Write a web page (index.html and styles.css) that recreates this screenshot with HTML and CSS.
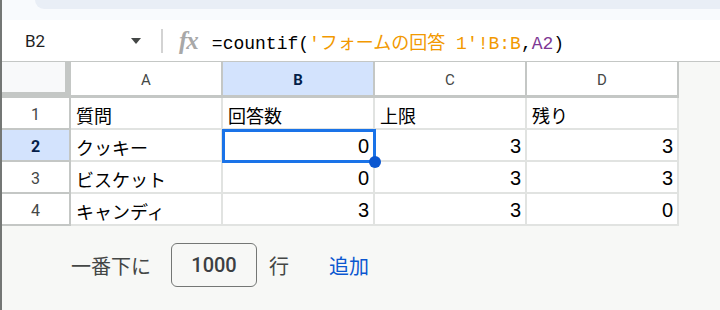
FILE: index.html
```html
<!DOCTYPE html>
<html>

<head>
    <link rel="stylesheet" href="styles.css">
</head>

<body>
    <div class="app">
        <div class="topbar">
            <div class="topbar-tab"></div>
        </div>

        <div class="formula-bar">
            <span class="name-box">B2</span>
            <span class="name-arrow"></span>
            <span class="divider"></span>
            <span class="fx">fx</span>
            <span class="formula">=countif(<span class="f-str">'フォームの回答 1'!B:B</span>,<span class="f-ref">A2</span>)</span>
        </div>

        <div class="sheet">
            <div class="corner"></div>
            <div class="col-head">A</div>
            <div class="col-head active">B</div>
            <div class="col-head">C</div>
            <div class="col-head">D</div>

            <div class="row-head">1</div>
            <div class="cell jp">質問</div>
            <div class="cell jp">回答数</div>
            <div class="cell jp">上限</div>
            <div class="cell jp">残り</div>

            <div class="row-head active">2</div>
            <div class="cell jp">クッキー</div>
            <div class="cell num selected">0<span class="handle"></span></div>
            <div class="cell num">3</div>
            <div class="cell num">3</div>

            <div class="row-head">3</div>
            <div class="cell jp">ビスケット</div>
            <div class="cell num">0</div>
            <div class="cell num">3</div>
            <div class="cell num">3</div>

            <div class="row-head">4</div>
            <div class="cell jp">キャンディ</div>
            <div class="cell num">3</div>
            <div class="cell num">3</div>
            <div class="cell num">0</div>
        </div>

        <div class="add-rows">
            <span>一番下に</span>
            <span class="count-box">1000</span>
            <span class="unit">行</span>
            <span class="add-link">追加</span>
        </div>
    </div>
</body>

</html>
```

FILE: styles.css
```css
body {
    margin: 0;
    font-family: "Liberation Sans", "Noto Sans CJK JP", sans-serif;
}

.app {
    height: 310px;
    border-left: 2px solid #747775;
    background-color: #f7f8f6;
    overflow: hidden;
}

.topbar {
    height: 20px;
    background-color: #f8fafd;
}

.topbar-tab {
    margin-left: 33px;
    height: 9px;
    background-color: #e9eef6;
    border-bottom-left-radius: 14px;
}

.formula-bar {
    height: 41px;
    display: flex;
    align-items: center;
    background-color: #fff;
    border-bottom: 1px solid #c4c7c5;
}

.name-box {
    width: 106px;
    padding-left: 23px;
    font-family: Roboto, sans-serif;
    font-size: 17px;
    color: #1f1f1f;
}

.name-arrow {
    width: 0;
    height: 0;
    border-left: 5px solid transparent;
    border-right: 5px solid transparent;
    border-top: 6px solid #444746;
}

.divider {
    width: 2px;
    height: 24px;
    margin-left: 20px;
    background-color: #d3d3d3;
}

.fx {
    margin-left: 16px;
    font-family: "Liberation Serif", serif;
    font-style: italic;
    font-weight: bold;
    font-size: 25px;
    color: #a8a8a8;
    letter-spacing: -1px;
}

.formula {
    margin-left: 14px;
    font-family: "Liberation Mono", "Noto Sans CJK JP", monospace;
    font-size: 18px;
    color: #000;
}

.f-str {
    color: #f29900;
}

.f-ref {
    color: #7e3794;
}

.sheet {
    display: grid;
    grid-template-columns: 69px 152px 152px 152px 152px;
    grid-template-rows: 36px 32px 32px 32px 32px;
}

.corner {
    background-color: #f8f9fa;
    border-right: 6px solid #c4c7c5;
    border-bottom: 6px solid #c4c7c5;
}

.col-head {
    display: flex;
    align-items: center;
    justify-content: center;
    padding-top: 2px;
    background-color: #fff;
    border-right: 2px solid #c4c7c5;
    border-bottom: 3px solid #c4c7c5;
    font-family: Roboto, sans-serif;
    font-size: 15px;
    color: #444746;
}

.row-head {
    display: flex;
    align-items: center;
    justify-content: center;
    padding-top: 2px;
    background-color: #fff;
    border-right: 2px solid #c4c7c5;
    border-bottom: 2px solid #c4c7c5;
    font-family: Roboto, sans-serif;
    font-size: 16px;
    color: #444746;
}

.col-head.active,
.row-head.active {
    background-color: #d3e3fd;
    color: #041e49;
    font-weight: bold;
}

.cell {
    position: relative;
    display: flex;
    align-items: center;
    padding: 3px 4px 0 5px;
    background-color: #fff;
    border-right: 2px solid #e1e3e1;
    border-bottom: 2px solid #e1e3e1;
    font-size: 20px;
    color: #000;
}

.cell.jp {
    font-size: 18px;
}

.cell.num {
    justify-content: flex-end;
}

.cell.selected {
    outline: 3px solid #1a73e8;
    outline-offset: -2px;
    z-index: 1;
}

.handle {
    position: absolute;
    right: -8px;
    bottom: -8px;
    width: 12px;
    height: 12px;
    border-radius: 50%;
    background-color: #0b57d0;
    z-index: 2;
}

.add-rows {
    display: flex;
    align-items: center;
    margin-top: 17px;
    padding-left: 69px;
    font-family: "Noto Sans CJK JP", sans-serif;
    font-size: 20px;
    color: #444746;
}

.count-box {
    width: 84px;
    height: 42px;
    margin-left: 20px;
    border: 1px solid #747775;
    border-radius: 6px;
    display: flex;
    align-items: center;
    justify-content: center;
    font-family: Roboto, sans-serif;
    font-weight: 500;
    font-size: 20px;
    color: #3c4043;
}

.unit {
    margin-left: 12px;
}

.add-link {
    margin-left: 40px;
    color: #0b57d0;
}
```
